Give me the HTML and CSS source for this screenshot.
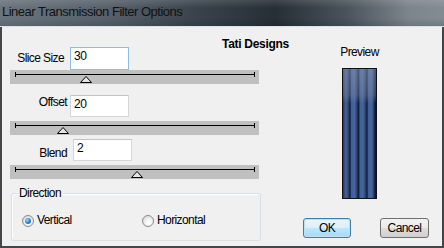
FILE: index.html
```html
<!DOCTYPE html>
<html lang="en">
<head>
  <meta charset="UTF-8" />
  <title>Linear Transmission Filter Options</title>
  <link rel="stylesheet" href="styles.css">
</head>
<body>
  <div class="window">
    <div class="titlebar">Linear Transmission Filter Options</div>

    <div class="client">
      <!-- Sliders and direction -->
      <div class="controls">
        <div class="row row-slice">
          <span class="label">Slice Size</span>
          <div class="field field-focus">30</div>
        </div>
        <div class="slider">
          <span class="track"></span>
          <svg class="thumb" style="left:70px" width="12" height="7" viewBox="0 0 12 7">
            <polygon points="0.5,6.5 6,0.5 11.5,6.5" fill="#e4e4e4" stroke="#000" stroke-width="1" />
          </svg>
        </div>

        <div class="row row-offset">
          <span class="label">Offset</span>
          <div class="field">20</div>
        </div>
        <div class="slider">
          <span class="track"></span>
          <svg class="thumb" style="left:47px" width="12" height="7" viewBox="0 0 12 7">
            <polygon points="0.5,6.5 6,0.5 11.5,6.5" fill="#e4e4e4" stroke="#000" stroke-width="1" />
          </svg>
        </div>

        <div class="row row-blend">
          <span class="label">Blend</span>
          <div class="field">2</div>
        </div>
        <div class="slider">
          <span class="track"></span>
          <svg class="thumb" style="left:121px" width="12" height="7" viewBox="0 0 12 7">
            <polygon points="0.5,6.5 6,0.5 11.5,6.5" fill="#e4e4e4" stroke="#000" stroke-width="1" />
          </svg>
        </div>

        <fieldset class="group">
          <legend>Direction</legend>
          <div class="options">
            <span class="option"><span class="radio checked"></span>Vertical</span>
            <span class="option"><span class="radio"></span>Horizontal</span>
          </div>
        </fieldset>
      </div>

      <!-- Preview and buttons -->
      <div class="side">
        <div class="side-top">
          <div class="brand">Tati Designs</div>
          <div class="preview">
            <div class="preview-label">Preview</div>
            <div class="preview-image"></div>
          </div>
        </div>
        <div class="buttons">
          <button class="btn btn-default">OK</button>
          <button class="btn btn-cancel">Cancel</button>
        </div>
      </div>
    </div>
  </div>
</body>
</html>
```

FILE: styles.css
```css
body {
  margin: 0;
  font-family: "Liberation Sans", Arial, sans-serif;
  font-size: 12px;
  letter-spacing: -0.6px;
  color: #000;
  background: #f0f0f0;
}

.window {
  width: 444px;
  height: 248px;
  display: flex;
  flex-direction: column;
}

.titlebar {
  height: 26px;
  line-height: 24px;
  padding-left: 2px;
  border-bottom: 1px solid #dde1e4;
  font-size: 13px;
  letter-spacing: -0.5px;
  color: #111;
  white-space: nowrap;
  background:
    linear-gradient(to bottom, rgba(255,255,255,0.12) 0, rgba(255,255,255,0) 8px, rgba(0,0,0,0) 18px, rgba(0,0,0,0.12) 26px),
    linear-gradient(to right, #6a747e 0%, #56606a 25%, #39424b 45%, #262e36 62%, #4a535c 78%, #7c848c 92%, #838b93 100%);
}

.client {
  flex: 1;
  display: flex;
  border: 2px solid #44474a;
  border-top: 0;
  background: #f0f0f0;
}

.controls {
  flex: none;
  width: 250px;
  margin-left: 8px;
  padding-top: 20px;
}

.row {
  display: flex;
  align-items: flex-start;
  height: 23px;
}

.label {
  width: 60px;
  box-sizing: border-box;
  padding-right: 6px;
  text-align: right;
  line-height: 15px;
  white-space: nowrap;
}

.row-slice .label {
  padding-top: 4px;
}

.row-offset {
  height: 22px;
  margin-top: 11px;
}

.row-offset .label {
  padding-right: 3px;
}

.row-blend {
  height: 22px;
  margin-top: 4px;
}

.row-blend .label {
  width: 63px;
  padding-top: 7px;
}

.field {
  width: 59px;
  height: 100%;
  box-sizing: border-box;
  padding: 1px 3px 0;
  border: 1px solid #d6d6d6;
  border-top-color: #c4c4c4;
  background: #fff;
  font-size: 12px;
  letter-spacing: -0.3px;
  line-height: 15px;
}

.field-focus {
  border-color: #8fbbe6;
}

.slider {
  position: relative;
  width: 249px;
  height: 14px;
  background: #c0c0c0;
}

.row-offset + .slider,
.row-blend + .slider {
  margin-top: 4px;
}

.track {
  position: absolute;
  left: 5px;
  top: 4px;
  width: 240px;
  height: 1px;
  background: #000;
}

.track::before,
.track::after {
  content: "";
  position: absolute;
  top: -2px;
  width: 1px;
  height: 5px;
  background: #000;
}

.track::before {
  left: 0;
}

.track::after {
  right: 0;
}

.thumb {
  position: absolute;
  top: 6px;
  display: block;
}

.group {
  width: 250px;
  height: 55px;
  box-sizing: border-box;
  margin: 7px 0 0 1px;
  padding: 0 10px;
  border: 1px solid #d5dfe5;
  border-radius: 3px;
  box-shadow: inset 1px 1px 0 #fff;
  min-inline-size: 0;
}

.group legend {
  margin-left: -5px;
  padding: 0 2px;
  line-height: 15px;
}

.options {
  display: grid;
  grid-template-columns: 120px auto;
  margin-top: 12px;
}

.option {
  display: flex;
  align-items: center;
  gap: 3px;
  line-height: 15px;
}

.radio {
  position: relative;
  width: 12px;
  height: 12px;
  box-sizing: border-box;
  border: 1px solid #8a8a8a;
  border-radius: 50%;
  background: radial-gradient(circle at 60% 65%, #ffffff 0, #f2f2f2 40%, #cfcfcf 100%);
}

.radio.checked::after {
  content: "";
  position: absolute;
  left: 2px;
  top: 2px;
  width: 6px;
  height: 6px;
  border-radius: 50%;
  background: radial-gradient(circle at 35% 35%, #9fdcff 0, #2a86d6 50%, #0e4f9a 100%);
}

.side {
  flex: 1;
  display: flex;
  flex-direction: column;
}

.side-top {
  display: flex;
  align-items: flex-start;
}

.brand {
  flex: none;
  width: 68px;
  margin: 10px 0 0 -38px;
  font-size: 12px;
  font-weight: bold;
  line-height: 14px;
  letter-spacing: -0.3px;
  white-space: nowrap;
}

.preview {
  width: 41px;
  margin: 18px 0 0 49px;
}

.preview-label {
  text-align: center;
  line-height: 15px;
}

.preview-image {
  width: 35px;
  height: 131px;
  box-sizing: border-box;
  margin: 8px 0 0 3px;
  border: 1px solid #111;
  background:
    linear-gradient(to bottom, rgba(150,160,180,0.45) 0, rgba(130,142,165,0.35) 26px, rgba(0,0,0,0) 34px),
    linear-gradient(to right, rgba(10,15,30,0.5) 0, rgba(0,0,0,0) 3px, rgba(0,0,0,0) 30px, rgba(10,15,30,0.5) 33px),
    repeating-linear-gradient(90deg, #3f5f98 0, #4466a2 3px, #2a3f6a 5.5px, #141d33 7px, #2f4676 8px, #3f5f98 8.5px);
}

.buttons {
  display: flex;
  gap: 29px;
  margin-top: auto;
  margin-bottom: 8px;
  padding-left: 43px;
}

.btn {
  width: 48px;
  height: 20px;
  padding: 0;
  border: 1px solid #707070;
  border-radius: 3px;
  font-family: "Liberation Sans", Arial, sans-serif;
  font-size: 12px;
  letter-spacing: -0.6px;
  color: #000;
  background: linear-gradient(to bottom, #f2f2f2 0%, #ebebeb 50%, #dddddd 51%, #cfcfcf 100%);
}

.btn-cancel {
  width: 49px;
}

.btn-default {
  border-color: #3c7fb1;
  box-shadow: inset 0 0 0 1px #b9e2f8;
  background: linear-gradient(to bottom, #eaf6fd 0%, #d9f0fc 50%, #bee6fd 51%, #a7d9f5 100%);
}
```
